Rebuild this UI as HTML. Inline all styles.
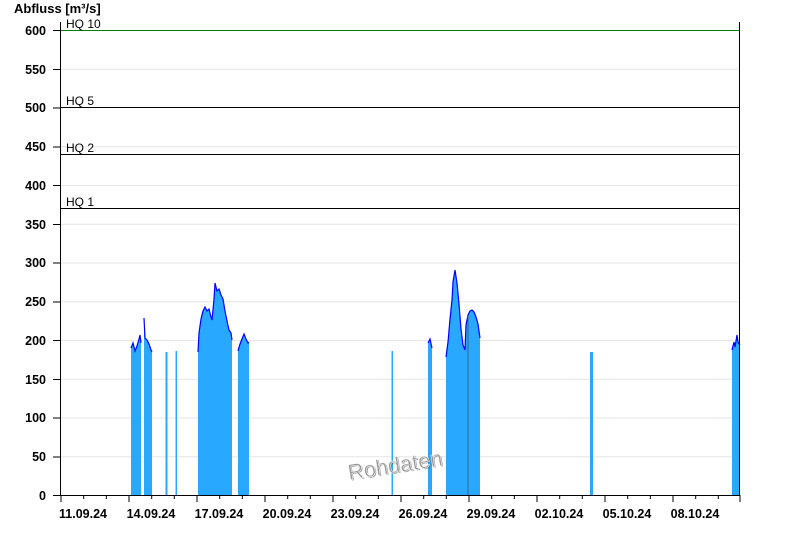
<!DOCTYPE html>
<html><head><meta charset="utf-8"><style>
html,body{margin:0;padding:0;background:#fff;width:800px;height:550px;overflow:hidden}
svg{display:block;font-family:"Liberation Sans",Arial,sans-serif}
</style></head><body>
<svg width="800" height="550" viewBox="0 0 800 550" xmlns="http://www.w3.org/2000/svg">
<text x="14" y="13" font-size="13" font-weight="bold" fill="#000">Abfluss [m³/s]</text>
<g stroke="#e6e6e6" stroke-width="1">
<line x1="60" x2="740" y1="456.75" y2="456.75"/><line x1="60" x2="740" y1="418" y2="418"/>
<line x1="60" x2="740" y1="379.25" y2="379.25"/><line x1="60" x2="740" y1="340.5" y2="340.5"/>
<line x1="60" x2="740" y1="301.75" y2="301.75"/><line x1="60" x2="740" y1="263" y2="263"/>
<line x1="60" x2="740" y1="224.25" y2="224.25"/><line x1="60" x2="740" y1="185.5" y2="185.5"/>
<line x1="60" x2="740" y1="146.75" y2="146.75"/><line x1="60" x2="740" y1="69.25" y2="69.25"/>
</g>
<g fill="#29a8ff" stroke="none">
<path d="M131 495V348L133 343L135 351L137 346L139 339L140 335L141 343V495Z"/>
<path d="M144 495V318L145 338L147 340L149 344L151 350L152 352V495Z"/>
<path d="M165.5 495V352H167.5V495Z"/>
<path d="M175.5 495V351H177V495Z"/>
<path d="M198 495V352L199 333L201 319L203 311L205 307L207 311L209 309L211 317L212 320L214 299L215 283L217 291L219 289L221 295L223 299L225 311L227 321L229 330L231 333L232 340V495Z"/>
<path d="M238 495V351L240 344L242 339L244 334L246 339L248 343L249 342V495Z"/>
<path d="M391.5 495V351H393V495Z"/>
<path d="M428 495V343L430 339L432 348V495Z"/>
<path d="M446 495V357L448 342L450 319L452 300L453 282L455 270L457 283L459 304L461 329L463 345L465 350L466 325L468 315L470 311L472 310L474 312L476 317L478 324L480 338V495Z"/>
<path d="M590 495V352H593V495Z"/>
<path d="M732 495V350L734 342L735 347L737 335L738 342L740 345V495Z"/>
</g>
<g fill="none" stroke="#0000ff" stroke-width="1.2">
<path d="M131 348L133 343L135 351L137 346L139 339L140 335L141 343"/>
<path d="M144 318L145 338L147 340L149 344L151 350L152 352"/>
<path d="M198 352L199 333L201 319L203 311L205 307L207 311L209 309L211 317L212 320L214 299L215 283L217 291L219 289L221 295L223 299L225 311L227 321L229 330L231 333L232 340"/>
<path d="M238 351L240 344L242 339L244 334L246 339L248 343L249 342"/>
<path d="M428 343L430 339L432 348"/>
<path d="M446 357L448 342L450 319L452 300L453 282L455 270L457 283L459 304L461 329L463 345L465 350L466 325L468 315L470 311L472 310L474 312L476 317L478 324L480 338"/>
<path d="M732 350L734 342L735 347L737 335L738 342L740 345"/>
</g>
<line x1="468" y1="316" x2="468" y2="495" stroke="#3a5f8a" stroke-width="1"/>
<line x1="60" x2="740" y1="30.5" y2="30.5" stroke="#008000"/>
<line x1="60" x2="740" y1="107.5" y2="107.5" stroke="#000"/>
<line x1="60" x2="740" y1="154.5" y2="154.5" stroke="#000"/>
<line x1="60" x2="740" y1="208.5" y2="208.5" stroke="#000"/>
<g font-size="12" fill="#000">
<text x="66" y="28">HQ 10</text><text x="66" y="105">HQ 5</text>
<text x="66" y="152">HQ 2</text><text x="66" y="206">HQ 1</text>
</g>
<line x1="60.5" y1="22" x2="60.5" y2="495" stroke="#000"/>
<line x1="739.5" y1="22" x2="739.5" y2="495" stroke="#000"/>
<line x1="60" y1="495.5" x2="740" y2="495.5" stroke="#000"/>
<g stroke="#000">
<line x1="53" x2="60" y1="30.5" y2="30.5"/><line x1="53" x2="60" y1="69.5" y2="69.5"/>
<line x1="53" x2="60" y1="108" y2="108"/><line x1="53" x2="60" y1="147" y2="147"/>
<line x1="53" x2="60" y1="185.5" y2="185.5"/><line x1="53" x2="60" y1="224.5" y2="224.5"/>
<line x1="53" x2="60" y1="263" y2="263"/><line x1="53" x2="60" y1="302" y2="302"/>
<line x1="53" x2="60" y1="340.5" y2="340.5"/><line x1="53" x2="60" y1="379.5" y2="379.5"/>
<line x1="53" x2="60" y1="418" y2="418"/><line x1="53" x2="60" y1="457" y2="457"/>
<line x1="53" x2="60" y1="495.5" y2="495.5"/>
</g>
<g font-size="12.5" font-weight="bold" text-anchor="end" fill="#000">
<text x="46" y="35">600</text><text x="46" y="74">550</text><text x="46" y="112">500</text>
<text x="46" y="151">450</text><text x="46" y="190">400</text><text x="46" y="229">350</text>
<text x="46" y="267">300</text><text x="46" y="306">250</text><text x="46" y="345">200</text>
<text x="46" y="384">150</text><text x="46" y="422">100</text><text x="46" y="461">50</text>
<text x="46" y="500">0</text>
</g>
<path stroke="#000" d="M61 495v7M83.7 495v4M106.3 495v4M129 495v7M151.7 495v4M174.3 495v4M197 495v7M219.7 495v4M242.3 495v4M265 495v7M287.7 495v4M310.3 495v4M333 495v7M355.7 495v4M378.3 495v4M401 495v7M423.7 495v4M446.3 495v4M469 495v7M491.7 495v4M514.3 495v4M537 495v7M559.7 495v4M582.3 495v4M605 495v7M627.7 495v4M650.3 495v4M673 495v7M695.7 495v4M718.3 495v4M740 495v7"/>
<g font-size="12.5" font-weight="bold" text-anchor="middle" fill="#000">
<text x="83" y="518">11.09.24</text><text x="151" y="518">14.09.24</text>
<text x="219" y="518">17.09.24</text><text x="287" y="518">20.09.24</text>
<text x="355" y="518">23.09.24</text><text x="423" y="518">26.09.24</text>
<text x="491" y="518">29.09.24</text><text x="559" y="518">02.10.24</text>
<text x="627" y="518">05.10.24</text><text x="695" y="518">08.10.24</text>
</g>
<g transform="rotate(-9 349 480)">
<text x="350" y="481" font-size="22" fill="#444" opacity="0.5">Rohdaten</text>
<text x="349" y="480" font-size="22" fill="#999" stroke="#fff" stroke-width="0.5">Rohdaten</text>
</g>
</svg>
</body></html>
